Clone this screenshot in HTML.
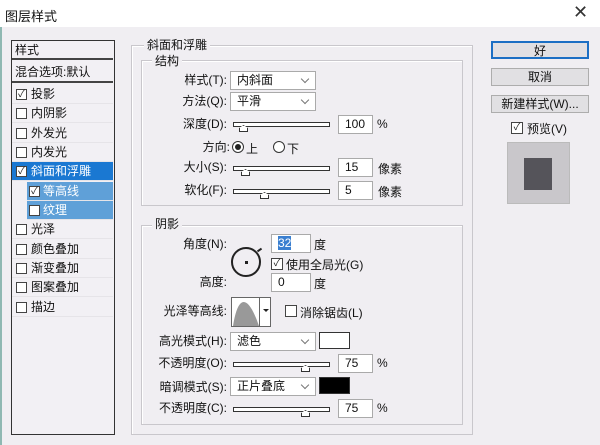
<!DOCTYPE html>
<html><head><meta charset="utf-8"><style>
*{box-sizing:border-box;margin:0;padding:0}
body{width:600px;height:445px;background:#f0eef2;font-family:"Liberation Sans","Noto Sans CJK SC",sans-serif;font-size:12px;color:#111;position:relative;overflow:hidden}
.a{position:absolute;white-space:nowrap}
.lbl{position:absolute;text-align:right;width:120px;line-height:14px}
.sel{position:absolute;width:86px;height:19px;background:#fff;border:1px solid #aaa;padding-left:6px;line-height:17px}
.sel:after{content:"";position:absolute;right:7px;top:4px;width:5px;height:5px;border-right:1px solid #777;border-bottom:1px solid #777;transform:rotate(45deg)}
.trk{position:absolute;width:97px;height:5px;border:1px solid #333;background:#fff}
.th{position:absolute;width:9px;height:7px;border:1px solid #333;background:#fff;clip-path:polygon(50% 0,100% 45%,100% 100%,0 100%,0 45%)}
.in{position:absolute;width:35px;height:19px;background:#fff;border:1px solid #aaa;padding-left:6px;line-height:17px}
.cb{position:absolute;width:11px;height:11px;border:1px solid #444;background:#fff;font-size:10px;line-height:9px;text-align:center;color:#222}
.grp{position:absolute;border:1px solid #c9c7cc;box-shadow:1px 1px 0 #fff inset}
.gt{position:absolute;background:#f0eef2;padding:0 3px;line-height:14px}
.row{position:absolute;left:12px;width:101px;height:19px;line-height:19px;border-bottom:1px solid #e6e4e8;padding-left:19px}
.btn{position:absolute;left:491px;width:98px;height:18px;background:#e1e0e3;border:1px solid #adadad;text-align:center;line-height:16px}
</style></head><body>
<div class="a" style="left:0;top:0;width:600px;height:27px;background:#fff"></div>
<div class="a" style="left:5px;top:6px;font-size:13px">图层样式</div>
<div class="a" style="left:573px;top:2px;font-size:18px;color:#333">✕</div>
<div class="a" style="left:0;top:27px;width:2px;height:418px;background:#8fb8b2"></div>

<div class="a" style="left:11px;top:40px;width:104px;height:395px;border:1px solid #333;background:#f2f0f4"></div>
<div class="row" style="top:41px;border-bottom:2px solid #444;padding-left:3px">样式</div>
<div class="row" style="top:62px;height:21px;line-height:21px;border-bottom:2px solid #444;padding-left:3px">混合选项:默认</div>
<div class="row" style="top:85px">投影</div><div class="cb" style="left:16px;top:89px">✓</div>
<div class="row" style="top:104px">内阴影</div><div class="cb" style="left:16px;top:108px"></div>
<div class="row" style="top:124px">外发光</div><div class="cb" style="left:16px;top:128px"></div>
<div class="row" style="top:143px">内发光</div><div class="cb" style="left:16px;top:147px"></div>
<div class="row" style="top:162px;background:#1a78d2;color:#fff">斜面和浮雕</div><div class="cb" style="left:16px;top:166px">✓</div>
<div class="row" style="top:182px;left:27px;width:86px;background:#5fa0d8;color:#fff;padding-left:16px">等高线</div><div class="cb" style="left:29px;top:186px">✓</div>
<div class="row" style="top:201px;left:27px;width:86px;background:#5fa0d8;color:#fff;padding-left:16px">纹理</div><div class="cb" style="left:29px;top:205px"></div>
<div class="row" style="top:220px">光泽</div><div class="cb" style="left:16px;top:224px"></div>
<div class="row" style="top:240px">颜色叠加</div><div class="cb" style="left:16px;top:244px"></div>
<div class="row" style="top:259px">渐变叠加</div><div class="cb" style="left:16px;top:263px"></div>
<div class="row" style="top:278px">图案叠加</div><div class="cb" style="left:16px;top:282px"></div>
<div class="row" style="top:298px">描边</div><div class="cb" style="left:16px;top:302px"></div>

<div class="grp" style="left:131px;top:45px;width:342px;height:390px"></div>
<div class="gt" style="left:144px;top:38px">斜面和浮雕</div>
<div class="grp" style="left:141px;top:60px;width:322px;height:146px"></div>
<div class="gt" style="left:152px;top:54px">结构</div>
<div class="grp" style="left:141px;top:225px;width:322px;height:200px"></div>
<div class="gt" style="left:152px;top:217px">阴影</div>

<div class="lbl" style="left:107px;top:73px">样式(T):</div><div class="sel" style="left:230px;top:71px">内斜面</div>
<div class="lbl" style="left:107px;top:94px">方法(Q):</div><div class="sel" style="left:230px;top:92px">平滑</div>
<div class="lbl" style="left:107px;top:117px">深度(D):</div><div class="trk" style="left:233px;top:122px"></div><div class="th" style="left:239px;top:125px"></div><div class="in" style="left:338px;top:115px">100</div><div class="a" style="left:377px;top:117px">%</div>
<div class="lbl" style="left:110px;top:140px">方向:</div>
<div class="a" style="left:232px;top:141px;width:12px;height:12px;border:1px solid #333;border-radius:50%;background:#fff"><div style="margin:2px;width:6px;height:6px;border-radius:50%;background:#222"></div></div><div class="a" style="left:246px;top:140px">上</div>
<div class="a" style="left:273px;top:141px;width:12px;height:12px;border:1px solid #333;border-radius:50%;background:#fff"></div><div class="a" style="left:287px;top:140px">下</div>
<div class="lbl" style="left:107px;top:160px">大小(S):</div><div class="trk" style="left:233px;top:166px"></div><div class="th" style="left:241px;top:169px"></div><div class="in" style="left:338px;top:158px">15</div><div class="a" style="left:378px;top:160px">像素</div>
<div class="lbl" style="left:107px;top:183px">软化(F):</div><div class="trk" style="left:233px;top:189px"></div><div class="th" style="left:260px;top:192px"></div><div class="in" style="left:338px;top:181px">5</div><div class="a" style="left:378px;top:183px">像素</div>

<div class="lbl" style="left:107px;top:237px">角度(N):</div>
<div class="a" style="left:231px;top:247px;width:30px;height:30px;border:2px solid #222;border-radius:50%"><div style="position:absolute;left:12px;top:12px;width:3px;height:3px;background:#222"></div></div>
<div class="a" style="left:257px;top:249px;width:5px;height:2px;background:#222;transform:rotate(-35deg)"></div>
<div class="in" style="left:271px;top:234px;width:40px"><span style="background:#3a7fd0;color:#fff">32</span></div><div class="a" style="left:314px;top:236px">度</div>
<div class="cb" style="left:271px;top:258px;width:12px;height:12px">✓</div><div class="a" style="left:286px;top:256px">使用全局光(G)</div>
<div class="lbl" style="left:107px;top:275px">高度:</div>
<div class="in" style="left:271px;top:273px;width:40px">0</div><div class="a" style="left:314px;top:275px">度</div>
<div class="lbl" style="left:107px;top:304px">光泽等高线:</div>
<div class="a" style="left:231px;top:297px;width:40px;height:30px;border:1px solid #666;background:#fff">
<svg width="28" height="28" style="position:absolute;left:0;top:0"><path d="M1 28 C6 -4 16 -4 27 28Z" fill="#999"/></svg>
<div style="position:absolute;left:27px;top:0;width:1px;height:28px;background:#666"></div>
<div style="position:absolute;left:31px;top:11px;border-left:3px solid transparent;border-right:3px solid transparent;border-top:3px solid #222"></div></div>
<div class="cb" style="left:285px;top:305px;width:12px;height:12px"></div><div class="a" style="left:300px;top:304px">消除锯齿(L)</div>
<div class="lbl" style="left:107px;top:334px">高光模式(H):</div><div class="sel" style="left:230px;top:332px">滤色</div>
<div class="a" style="left:319px;top:332px;width:31px;height:17px;border:1px solid #333;background:#fff"></div>
<div class="lbl" style="left:107px;top:356px">不透明度(O):</div><div class="trk" style="left:233px;top:362px"></div><div class="th" style="left:301px;top:365px"></div><div class="in" style="left:338px;top:354px">75</div><div class="a" style="left:377px;top:356px">%</div>
<div class="lbl" style="left:107px;top:380px">暗调模式(S):</div><div class="sel" style="left:230px;top:377px">正片叠底</div>
<div class="a" style="left:319px;top:377px;width:31px;height:17px;border:1px solid #333;background:#000"></div>
<div class="lbl" style="left:107px;top:401px">不透明度(C):</div><div class="trk" style="left:233px;top:407px"></div><div class="th" style="left:301px;top:410px"></div><div class="in" style="left:338px;top:399px">75</div><div class="a" style="left:377px;top:401px">%</div>

<div class="btn" style="top:41px;border:2px solid #1b6fc4">好</div>
<div class="btn" style="top:68px">取消</div>
<div class="btn" style="top:95px">新建样式(W)...</div>
<div class="cb" style="left:511px;top:122px;width:12px;height:12px">✓</div><div class="a" style="left:527px;top:120px">预览(V)</div>
<div class="a" style="left:507px;top:142px;width:63px;height:62px;background:#c9c7cb;border:1px solid #bbb"></div>
<div class="a" style="left:524px;top:158px;width:28px;height:32px;background:#55545a"></div>
</body></html>
